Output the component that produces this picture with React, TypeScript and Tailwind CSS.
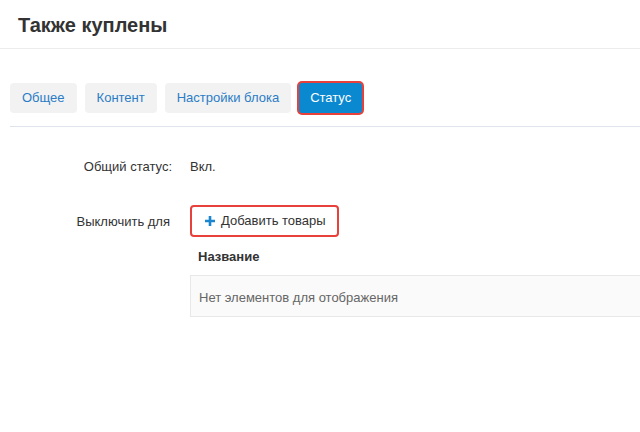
import React from 'react';

const tabs = ['Общее', 'Контент', 'Настройки блока'];

const App: React.FC = () => {
  return (
    <div className="w-[640px] h-[432px] overflow-hidden bg-white text-[#333] font-['Liberation_Sans',Arial,sans-serif]">
      <div className="h-[49px] border-b border-[#ececec] px-[18px] pt-[13px]">
        <h1 className="text-[20px] leading-[24px] font-bold text-[#333]">Также куплены</h1>
      </div>

      <div className="pl-[10px]">
        <div className="flex gap-[8px] pt-[34px] pb-[13px] border-b border-[#dfe4ec]">
          {tabs.map((t) => (
            <div key={t} className="h-[30px] px-[12px] flex items-center rounded-[4px] bg-[#f2f2f2] text-[13px] text-[#2b7cc6] whitespace-nowrap">
              {t}
            </div>
          ))}
          <div className="h-[34px] -my-[2px] -ml-[2px] px-[2px] flex items-center rounded-[5px] bg-[#e8403a]">
            <div className="h-[30px] px-[11px] flex items-center rounded-[3px] bg-[#0a88d0] text-[13px] text-white">
              Статус
            </div>
          </div>
        </div>

        <div className="flex items-center mt-[30px]">
          <div className="w-[162px] text-right text-[13px] text-[#333]">Общий статус:</div>
          <div className="ml-[18px] text-[13px] text-[#333]">Вкл.</div>
        </div>

        <div className="flex mt-[28px]">
          <div className="w-[160px] pt-[7px] text-right text-[13px] text-[#333]">Выключить для</div>
          <div className="ml-[20px] flex-1 -mr-[4px]">
            <div className="inline-flex items-center h-[32px] pl-[13px] pr-[11px] rounded-[4px] border-2 border-[#e8403a] bg-white text-[13px] text-[#333] whitespace-nowrap">
              <svg width="10" height="10" viewBox="0 0 10 10" className="mr-[6px]">
                <path d="M5 0v10M0 5h10" stroke="#1a86cf" strokeWidth="2.6" />
              </svg>
              Добавить товары
            </div>
            <div className="pt-[10px] pb-[9px] px-[8px] text-[13px] font-bold text-[#333]">Название</div>
            <div className="h-[42px] flex items-center pt-[3px] px-[8px] border border-[#e8e8e8] bg-[#fafafa] text-[13px] text-[#666]">
              Нет элементов для отображения
            </div>
          </div>
        </div>
      </div>
    </div>
  );
};

export default App;
